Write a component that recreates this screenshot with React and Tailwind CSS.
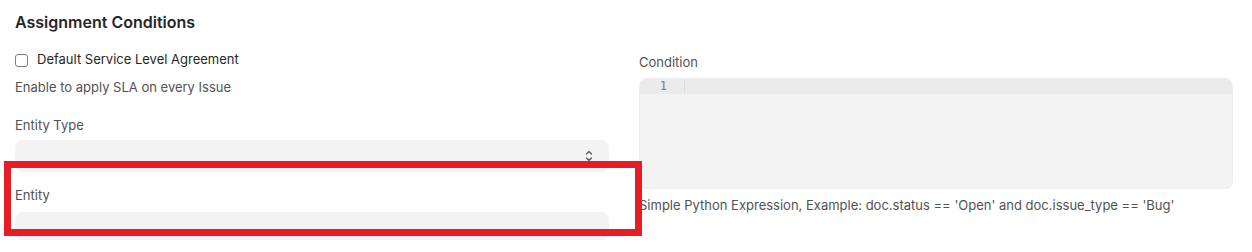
import React from 'react';

function SelectArrows() {
  return (
    <svg width="10" height="14" viewBox="0 0 10 14" fill="none" stroke="#525252" strokeWidth="1.2" strokeLinecap="round" strokeLinejoin="round">
      <path d="M2.5 5 L5 2.5 L7.5 5" />
      <path d="M2.5 9 L5 11.5 L7.5 9" />
    </svg>
  );
}

export default function App() {
  return (
    <div
      className="relative w-[1252px] h-[252px] bg-white overflow-hidden text-[#383838]"
      style={{ fontFamily: 'Inter, "Noto Sans", sans-serif' }}
    >
      <div className="pl-[15px] pt-[12px]">
        <h2 className="text-[16px] leading-[20px] font-semibold text-[#262626]">Assignment Conditions</h2>

        <div className="flex gap-[30px] mt-[19px]">
          {/* left column */}
          <div className="w-[594px] flex flex-col">
            <label className="flex items-center gap-[9px] h-[18px]">
              <span className="w-[13px] h-[13px] rounded-[3px] border border-[#7c7c7c] bg-white" />
              <span className="text-[13px] text-[#262626]">Default Service Level Agreement</span>
            </label>
            <p className="mt-[9px] text-[13px] leading-[18px] text-[#525252]">Enable to apply SLA on every Issue</p>

            <span className="mt-[20px] text-[13px] leading-[18px] text-[#525252]">Entity Type</span>
            <div className="mt-[6px] h-[32px] rounded-[8px] bg-[#f3f3f3] flex items-center justify-end pr-[15px]">
              <SelectArrows />
            </div>

            <span className="mt-[14px] text-[13px] leading-[18px] text-[#525252]">Entity</span>
            <div className="mt-[8px] h-[28px] rounded-[8px] bg-[#f3f3f3]" />
          </div>

          {/* right column */}
          <div className="w-[594px] flex flex-col pt-[2px]">
            <span className="text-[13px] leading-[18px] text-[#525252]">Condition</span>
            <div className="mt-[7px] h-[111px] rounded-[8px] bg-[#f3f3f3] overflow-hidden border border-[#eeeeee]">
              <div className="flex h-[15px] bg-[#ebebeb]">
                <div className="w-[44px] pr-[17px] text-right text-[12px] leading-[15px] text-[#7c7c7c]" style={{ fontFamily: '"DejaVu Sans Mono", monospace' }}>1</div>
                <div className="w-[1px] bg-[#dcdcdc]" />
              </div>
            </div>
            <p className="mt-[7px] text-[13px] leading-[18px] text-[#525252]">
              Simple Python Expression, Example: doc.status == 'Open' and doc.issue_type == 'Bug'
            </p>
          </div>
        </div>
      </div>

      {/* annotation highlight */}
      <div className="absolute left-[4px] top-[161px] w-[638px] h-[75px] border-[7px] border-[#e81c24]" />
    </div>
  );
}
